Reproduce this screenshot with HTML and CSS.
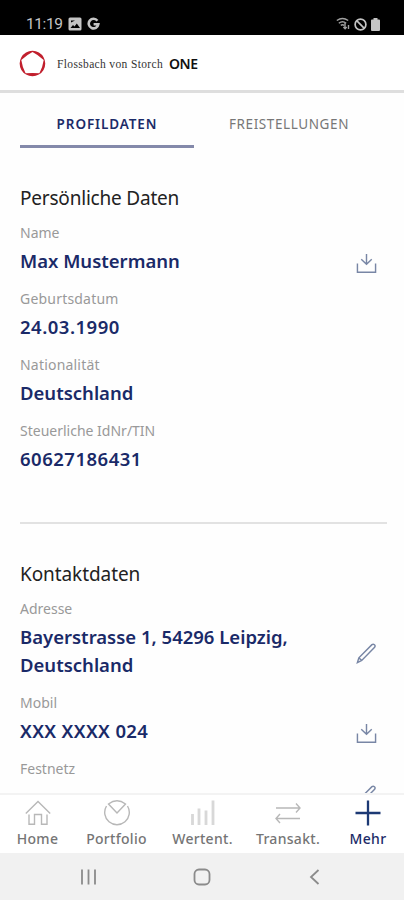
FILE: index.html
```html
<!DOCTYPE html>
<html lang="de">
<head>
<meta charset="utf-8">
<meta name="viewport" content="width=device-width">
<title>Profildaten</title>
<link rel="stylesheet" href="styles.css">
</head>
<body>
<svg width="0" height="0" class="defs" aria-hidden="true">
  <symbol id="download" viewBox="0 0 22 22"><path d="M1.500 11v9.200h19V11M11 1v10.500M5.500 6.500l5.500 5.300 5.500-5.300"/></symbol>
  <symbol id="pencil" viewBox="0 0 22 22"><path d="M1.500 20.500l1.500-5L16.700 1.700q1.300-1 2.600.1t.2 2.700L6 18.300zM3 15.500l3 2.800"/></symbol>
</svg>
<div class="screen">
  <div class="status">
    <span class="time">11:19</span>
    <svg class="photo" width="14" height="14" viewBox="0 0 14 14"><path fill="#c4c4c4" fill-rule="evenodd" d="M2 .5h10q1.500 0 1.500 1.500v10q0 1.500-1.500 1.500H2Q.5 13.500.5 12V2Q.5.500 2 .5zM2.500 11h9.500L8.800 6.500 6.500 9.500 5 8zM3 3.500v2l4-2z"/></svg>
    <svg class="google" width="13" height="14" viewBox="0 0 13 14"><path fill="none" stroke="#c4c4c4" stroke-width="2.600" d="M10.400 3.700A4.800 4.800 0 1 0 11.300 7.300H6.600"/></svg>
    <svg class="wifi" width="15" height="14" viewBox="0 0 15 14"><g fill="none" stroke="#a0a0a0" stroke-width="1.400"><path d="M.8 3.500q5.700-4 11.400 0M2.800 6.200q3.700-2.800 7.400 0M4.800 8.400q1.700-1.400 3.400 0"/><path d="M9 6v5.500M7.400 10l1.700 1.800L10.700 10M12.500 12V8"/></g></svg>
    <svg class="block" width="13" height="13" viewBox="0 0 13 13"><g fill="none" stroke="#c4c4c4" stroke-width="1.700"><circle cx="6.500" cy="6.500" r="5.400"/><path d="M2.700 2.700l7.600 7.600"/></g></svg>
    <svg width="9" height="13" viewBox="0 0 9 13"><path fill="#c4c4c4" d="M2.500 0h4v1.500H8q1 0 1 1V12q0 1-1 1H1q-1 0-1-1V2.500q0-1 1-1h1.500z"/></svg>
  </div>
  <header class="brand">
    <svg width="27" height="27" viewBox="0 0 27 27"><path fill="#c11f2d" fill-rule="evenodd" d="M13.500.7A12.800 12.800 0 1 1 13.400.7zM13.500 2Q8.500 4.500 2.300 9.900 3.300 17 6.600 23.200 13.500 22.600 20.400 23.200 23.700 17 24.700 9.900 18.500 4.500 13.500 2z"/></svg>
    <span class="serif">Flossbach von Storch</span>
    <span class="one">ONE</span>
  </header>
  <nav class="tabs">
    <a class="tab active"><span class="t1">PROFILDATEN</span></a>
    <a class="tab"><span class="t2">FREISTELLUNGEN</span></a>
  </nav>
  <main class="content">
    <section class="section">
      <h2 class="h1">Persönliche Daten</h2>
      <div class="field"><div><div class="label">Name</div><div class="value">Max Mustermann</div></div><svg class="icon"><use href="#download"/></svg></div>
      <div class="field"><div><div class="label wide">Geburtsdatum</div><div class="value num">24.03.1990</div></div></div>
      <div class="field"><div><div class="label wide">Nationalität</div><div class="value">Deutschland</div></div></div>
      <div class="field"><div><div class="label">Steuerliche IdNr/TIN</div><div class="value num">60627186431</div></div></div>
    </section>
    <section class="section second">
      <h2>Kontaktdaten</h2>
      <div class="field"><div><div class="label">Adresse</div><div class="value">Bayerstrasse 1, 54296 Leipzig,<br>Deutschland</div></div><svg class="icon edit"><use href="#pencil"/></svg></div>
      <div class="field"><div><div class="label">Mobil</div><div class="value xx">XXX XXXX 024</div></div><svg class="icon"><use href="#download"/></svg></div>
      <div class="field"><div><div class="label">Festnetz</div><div class="value">&nbsp;</div></div><svg class="icon last"><use href="#pencil"/></svg></div>
    </section>
  </main>
  <nav class="bottom">
    <a class="item"><svg width="26" height="26" viewBox="0 0 26 26"><path d="M.8 13.500L13 1.500l12.200 12M4 14.500v9.700h5.500V14.500h7v9.700H22v-9.700"/></svg><span>Home</span></a>
    <a class="item"><svg width="28" height="26" viewBox="0 0 28 26"><path d="M3.500 6A12.300 12.300 0 1 0 24.500 6M5.500 4Q14-2.500 22.500 4L14 13z"/></svg><span>Portfolio</span></a>
    <a class="item"><svg width="26" height="26" viewBox="0 0 26 26"><path class="bars" d="M2.500 25V14M9 25V8.500M16 25V10.500M23 25V.5"/></svg><span>Wertent.</span></a>
    <a class="item"><svg width="26" height="26" viewBox="0 0 26 26"><path d="M1 8h24M21 3.500L25 8l-4 4.500M25 18.500H1M5 14l-4 4.500L5 23"/></svg><span>Transakt.</span></a>
    <a class="item more"><svg width="26" height="26" viewBox="0 0 26 26"><path d="M13 .5v25M.5 13h25"/></svg><span>Mehr</span></a>
  </nav>
  <div class="system">
    <svg width="18" height="18" viewBox="0 0 18 18"><path d="M2 1.500v15M8.500 1.500v15M15 1.500v15"/></svg>
    <svg width="18" height="18" viewBox="0 0 18 18"><rect x="1.500" y="1.500" width="15" height="15" rx="4.500"/></svg>
    <svg width="18" height="18" viewBox="0 0 18 18"><path d="M12.500 2L5 9l7.500 7"/></svg>
  </div>
</div>
</body>
</html>
```
FILE: styles.css
```css
* { box-sizing: border-box; }
body { margin: 0; background: #fff; font-family: "Noto Sans", "Open Sans", sans-serif; }
.defs { position: absolute; }
.screen { width: 404px; height: 900px; display: flex; flex-direction: column; overflow: hidden; background: #fefefe; white-space: nowrap; }
svg { display: block; flex: none; }
.status { height: 35px; flex: none; background: #000; display: flex; align-items: center; padding: 13px 24px 0 26px; }
.time { font: 15.5px/20px Roboto, sans-serif; color: #c4c4c4; width: 42px; letter-spacing: -.4px; }
.google { margin-left: 5px; }
.wifi { margin-left: auto; margin-right: 3px; }
.block { margin-right: 4px; }
.brand { height: 58px; flex: none; display: flex; align-items: center; padding: 2px 0 0 19px; background: #fff; border-bottom: 3px solid #dedede; }
.serif { font: 11.5px/20px "Liberation Serif", serif; color: #333; margin-left: 11px; width: 112px; letter-spacing: .35px; }
.one { font-weight: 600; font-size: 14px; line-height: 20px; color: #111; letter-spacing: -.4px; }
.tabs { height: 55px; flex: none; display: flex; padding: 0 20px; }
.tab { width: 174px; height: 55px; display: flex; justify-content: center; align-items: center; padding-top: 10px; border-bottom: 3px solid transparent; font-size: 13.5px; color: #777; margin-right: 8px; }
.tab.active { color: #1c2b68; font-weight: 600; border-color: #8489aa; }
.t1 { letter-spacing: .9px; }
.t2 { letter-spacing: .6px; }
.content { flex: 1; min-height: 0; overflow: hidden; padding: 0 17px 0 20px; }
.section { padding-top: 35px; height: 376px; border-bottom: 2px solid #e2e2e2; }
.second { height: auto; border: 0; }
h2 { margin: 0 0 7px; font-size: 19px; line-height: 31px; font-weight: 400; color: #222; letter-spacing: -.08px; }
.h1 { letter-spacing: -.2px; }
.field { display: flex; justify-content: space-between; align-items: flex-end; margin-bottom: 12px; }
.label { font-size: 14px; line-height: 24px; margin-bottom: 2px; color: #999; }
.wide { letter-spacing: .2px; }
.value { font-size: 18.5px; line-height: 28px; font-weight: 600; color: #1a2a68; }
.num { letter-spacing: .5px; }
.xx { letter-spacing: .35px; }
.icon { width: 21px; height: 21px; margin: 0 10px 1px 0; fill: none; stroke: #7886a5; stroke-width: 1.5; }
.edit { margin-bottom: 15px; }
.last { margin-bottom: 5px; }
.bottom { height: 60px; flex: none; display: grid; grid-template-columns: 75px 83px 89px 82px 78px; background: #fff; border-top: 2px solid #f3f3f3; }
.item { display: flex; flex-direction: column; align-items: center; padding-top: 5px; font-size: 14px; line-height: 20px; font-weight: 500; letter-spacing: .3px; color: #757575; }
.item svg { fill: none; stroke: #b8b8b8; stroke-width: 1.4; margin-bottom: 3px; }
.item .bars { stroke: #d8d8d8; stroke-width: 2.8; }
.more { color: #1c2b68; }
.more svg { stroke: #1c3974; stroke-width: 2.3; }
.system { height: 47px; flex: none; background: #f1f1f1; display: flex; justify-content: space-between; align-items: center; padding: 0 80px; }
.system svg { fill: none; stroke: #8b8b8b; stroke-width: 1.8; }
```
